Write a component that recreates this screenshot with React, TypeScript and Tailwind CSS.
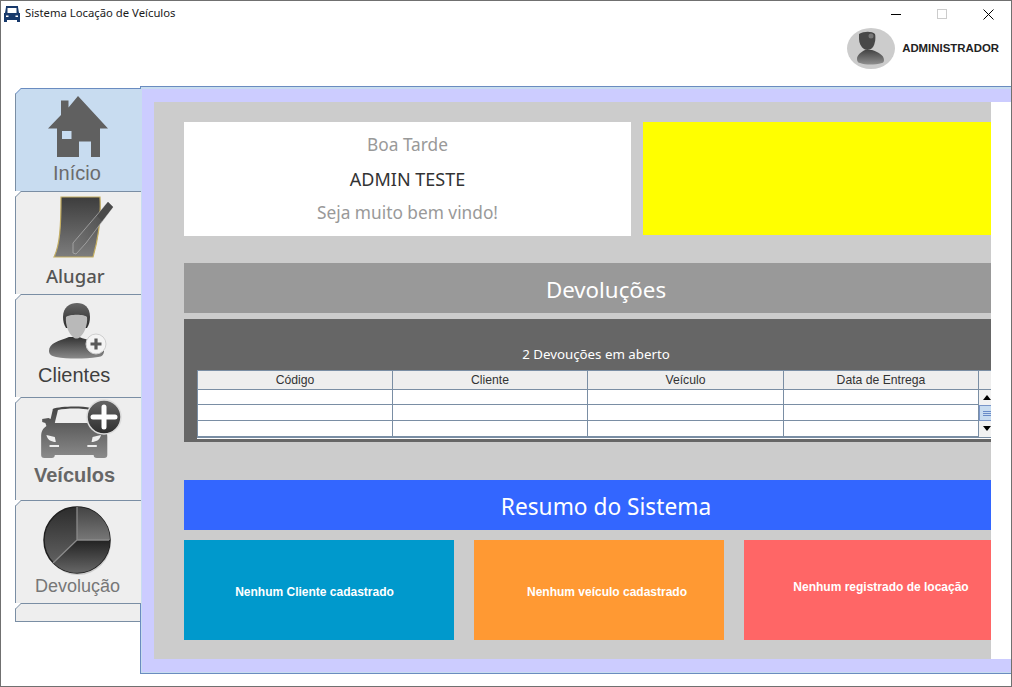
import React from 'react';

const sans = 'font-["Noto_Sans",sans-serif]';
const arial = 'font-["Liberation_Sans",Arial,sans-serif]';

const BusIcon = () => (
  <svg width="16" height="16" viewBox="0 0 16 16" className="shrink-0">
    <path d="M2 0h12v1l1 6h1v9h-3v-2H3v2H0V7h1l1-6z" fill="#17396b" />
    <rect x="3.500" y="2" width="9" height="5" fill="#fff" />
    <rect x="2" y="9.500" width="2.500" height="1.500" fill="#fff" />
    <rect x="11.500" y="9.500" width="2.500" height="1.500" fill="#fff" />
  </svg>
);

const Avatar = () => (
  <svg width="48" height="41" viewBox="0 0 48 41" className="shrink-0">
    <defs>
      <linearGradient id="avBody" x1="0" y1="0" x2="0" y2="1">
        <stop offset="0%" stopColor="#444" />
        <stop offset="100%" stopColor="#8f8f8f" />
      </linearGradient>
    </defs>
    <ellipse cx="24" cy="20.500" rx="24" ry="20.500" fill="#cccccc" />
    <path d="M10 31c0-4 4-7 8-9h7c6 2 12 5 12 10 0 2-1 3-2 3-8 2-16 2-22 0-2 0-3-2-3-4z" fill="url(#avBody)" />
    <path d="M12 6c5-3 13-3 16 0 1 4 0 10-2 13-2 3-6 4-9 2-3-2-5-6-5-10z" fill="#484848" />
    <circle cx="24" cy="8" r="2.500" fill="#777" />
  </svg>
);

const Chamfer = ({ color }: { color: string }) => (
  <svg width="6" height="6" viewBox="0 0 6 6" className="absolute -left-px -top-px">
    <path d="M0 6V0h6z" fill="#fff" />
    <path d="M0.500 6L6 0.500" stroke={color} strokeWidth="1" fill="none" />
  </svg>
);

const HouseIcon = () => (
  <svg width="60" height="62" viewBox="0 0 60 62">
    <path
      d="M30 0L60 32.500H52V61H43V45.500H31V61H9V32.500H0L13 19V4.500H20.500V11.500z"
      fill="#606060"
    />
    <rect x="14" y="35" width="9.500" height="8" fill="#c8dcf0" />
  </svg>
);

const NoteIcon = () => (
  <svg width="62" height="66" viewBox="0 0 62 66">
    <defs>
      <linearGradient id="note" x1="0" y1="0" x2="0" y2="1">
        <stop offset="0%" stopColor="#3d3d3d" />
        <stop offset="100%" stopColor="#7d7d7d" />
      </linearGradient>
      <linearGradient id="pen" x1="1" y1="0" x2="0" y2="1">
        <stop offset="0%" stopColor="#444" />
        <stop offset="100%" stopColor="#777" />
      </linearGradient>
    </defs>
    <path
      d="M9 2H48C49 20 48 38 41 62H2C8 50 9 30 9 2z"
      fill="url(#note)"
      stroke="#c4ae62"
      strokeWidth="1.200"
    />
    <path
      d="M56 7L61 12 34 48 24 59 21 58 21 48z"
      fill="url(#pen)"
      stroke="#b4b4b4"
      strokeWidth="0.700"
    />
    <path d="M56 7L61 12 50 26 45 21z" fill="#4a4a4a" />
  </svg>
);

const ClientIcon = () => (
  <svg width="62" height="62" viewBox="0 0 62 62">
    <defs>
      <linearGradient id="shirt" x1="0" y1="0" x2="0" y2="1">
        <stop offset="0%" stopColor="#333" />
        <stop offset="100%" stopColor="#8a8a8a" />
      </linearGradient>
      <linearGradient id="hair" x1="0" y1="0" x2="0" y2="1">
        <stop offset="0%" stopColor="#666" />
        <stop offset="100%" stopColor="#2a2a2a" />
      </linearGradient>
    </defs>
    <path d="M3 50c0-8 10-10 20-14h10c8 3 24 6 25 14 0 3-2 6-6 6-14 2-30 2-42 0-5-1-7-3-7-6z" fill="url(#shirt)" />
    <path d="M17 16C17 6 24 2 31 2s13 4 13 14c0 4-1 8-3 11H20c-2-3-3-7-3-11z" fill="url(#hair)" />
    <path d="M20 16c3-3 19-3 21 0 1 8-3 17-7 20-2 2-5 2-7 0-4-3-8-12-7-20z" fill="#b9b9b9" />
    <circle cx="50" cy="43" r="10" fill="#f4f4f4" stroke="#cfcfcf" />
    <path d="M50 37.500v11M44.500 43h11" stroke="#5a5a5a" strokeWidth="3.200" />
  </svg>
);

const CarIcon = () => (
  <svg width="84" height="62" viewBox="0 0 84 62">
    <defs>
      <linearGradient id="car" x1="0" y1="0" x2="0" y2="1">
        <stop offset="0%" stopColor="#454545" />
        <stop offset="100%" stopColor="#8a8a8a" />
      </linearGradient>
      <linearGradient id="plus" x1="0" y1="0" x2="0" y2="1">
        <stop offset="0%" stopColor="#666" />
        <stop offset="100%" stopColor="#2d2d2d" />
      </linearGradient>
    </defs>
    <g transform="translate(-3 0) scale(1.05 1)">
      <path
        d="M14 10c8-3 28-3 36-1 3 1 5 7 6 13l5 0v5c4 3 5 6 5 11v18c0 2-1 3-3 3h-7c-2 0-3-1-3-3H16c0 2-1 3-3 3H6c-2 0-3-1-3-3V38c0-5 1-8 5-11l-1-3-3-1v-3l6-1 2 1 2-9z"
        fill="url(#car)"
      />
      <path d="M16 24l3-13c8-2 24-2 30 0l4 13z" fill="#eeeeee" />
      <path d="M8 36l8 2 1 5c-4 0-8-2-9-7zM60 36l-8 2-1 5c4 0 8-2 9-7z" fill="#eeeeee" />
      <path d="M11 46h9v2h-9zM47 46h9v2h-9z" fill="#eeeeee" />
    </g>
    <circle cx="63" cy="18" r="17" fill="url(#plus)" stroke="#dcdcdc" strokeWidth="1.500" />
    <path d="M63 8v20M52 18h22" stroke="#fff" strokeWidth="5" strokeLinecap="round" />
  </svg>
);

const PieIcon = () => (
  <svg width="72" height="70" viewBox="0 0 72 70">
    <defs>
      <linearGradient id="pieA" x1="0" y1="0" x2="0" y2="1">
        <stop offset="0%" stopColor="#2c2c2c" />
        <stop offset="100%" stopColor="#6a6a6a" />
      </linearGradient>
      <linearGradient id="pieB" x1="0" y1="0" x2="0" y2="1">
        <stop offset="0%" stopColor="#444" />
        <stop offset="100%" stopColor="#777" />
      </linearGradient>
      <linearGradient id="pieC" x1="0" y1="0" x2="0" y2="1">
        <stop offset="0%" stopColor="#222" />
        <stop offset="100%" stopColor="#666" />
      </linearGradient>
    </defs>
    <circle cx="36" cy="36" r="33" fill="#aaa" opacity="0.500" />
    <circle cx="35" cy="34" r="33" fill="url(#pieA)" stroke="#1f1f1f" strokeWidth="1.500" />
    <path d="M35 34V1a33 33 0 0 1 33 33z" fill="url(#pieB)" />
    <path d="M35 34H68A33 33 0 0 1 11.500 57z" fill="url(#pieC)" />
    <path d="M35 1V34H67M35 34L11 57" stroke="#8a8a8a" strokeWidth="1.300" fill="none" />
  </svg>
);

type TabProps = {
  active?: boolean;
  icon: React.ReactNode;
  label: string;
  labelClass: string;
  iconClass: string;
};

const Tab = ({ active, icon, label, labelClass, iconClass }: TabProps) => (
  <div
    className={`relative h-[103px] border-t flex flex-col items-center ${
      active ? 'bg-[#c8dcf0] border-[#6a8cc0]' : 'bg-[#eeeeee] border-[#7a8ea4]'
    }`}
  >
    <Chamfer color={active ? '#6a8cc0' : '#7a8ea4'} />
    <div className={iconClass}>{icon}</div>
    <span className={`absolute leading-none ${labelClass}`}>{label}</span>
  </div>
);

const Sidebar = () => (
  <div className="w-[126px] h-[534px] mt-[2px] shrink-0 border-l border-b border-[#7a8ea4] bg-[#eeeeee]">
    <Tab
      active
      icon={<HouseIcon />}
      label="Início"
      iconClass="ml-[-1px] mt-[7px]"
      labelClass={`${arial} top-[74px] left-[37px] text-[20px] text-[#6b6b6b]`}
    />
    <Tab
      icon={<NoteIcon />}
      label="Alugar"
      iconClass="ml-[8px] mt-[3px]"
      labelClass={`${sans} top-[75px] left-[30px] text-[18.500px] font-medium text-[#555555]`}
    />
    <Tab
      icon={<ClientIcon />}
      label="Clientes"
      iconClass="ml-[-3px] mt-[6px]"
      labelClass={`${arial} top-[70px] left-[22px] text-[20px] text-[#3f3f3f]`}
    />
    <Tab
      icon={<CarIcon />}
      label="Veículos"
      iconClass="ml-[9px] mt-[1px]"
      labelClass={`${arial} top-[67px] left-[18px] text-[20px] font-bold text-[#666666]`}
    />
    <Tab
      icon={<PieIcon />}
      label="Devolução"
      iconClass="ml-[-1px] mt-[5px]"
      labelClass={`${arial} top-[76px] left-[19px] text-[18px] text-[#777777]`}
    />
    <div className="relative h-[17px] border-t border-[#7a8ea4]">
      <Chamfer color="#7a8ea4" />
    </div>
  </div>
);

const Devolucoes = () => {
  const cols = ['Código', 'Cliente', 'Veículo', 'Data de Entrega'];
  const widths = ['w-[195px]', 'w-[195px]', 'w-[196px]', 'w-[195px]'];
  return (
    <div className="w-[844px] h-[123px] mt-[6px] bg-[#666666] pl-[13px] pt-[26px]">
      <div className={`${sans} h-[25px] w-[798px] text-center text-[13.300px] leading-[19px] text-white`}>
        2 Devouções em aberto
      </div>
      <div className={`${arial} flex w-[798px] h-[68px] border-l border-t border-b-2 border-[#7a8ea4] bg-white`}>
        {cols.map((col, i) => (
          <div key={col} className={`${widths[i]} h-full border-r border-[#7a8ea4]`}>
            <div className="h-[19px] bg-[#eeeeee] border-b border-[#7a8ea4] text-center text-[12.200px] leading-[19px] text-[#333333]">
              {col}
            </div>
            <div className="h-[15px] border-b border-[#7a8ea4]" />
            <div className="h-[16px] border-b border-[#7a8ea4]" />
          </div>
        ))}
        <div className="flex-1 h-full">
          <div className="h-[19px] bg-[#eeeeee] border-b border-[#7a8ea4]" />
          <div className="h-[47px] bg-[#f2f2f2] flex flex-col items-center">
            <div className="w-full h-[15px] flex items-center justify-center">
              <div className="w-0 h-0 border-x-[4px] border-x-transparent border-b-[5px] border-b-black" />
            </div>
            <div className="w-full h-[16px] bg-[#c8dcf0] border border-[#7a96c8] flex flex-col gap-[1px] items-center justify-center">
              <div className="w-[9px] h-px bg-[#6a8cc8]" />
              <div className="w-[9px] h-px bg-[#6a8cc8]" />
              <div className="w-[9px] h-px bg-[#6a8cc8]" />
            </div>
            <div className="w-full h-[15px] flex items-center justify-center">
              <div className="w-0 h-0 border-x-[4px] border-x-transparent border-t-[5px] border-t-black" />
            </div>
          </div>
        </div>
      </div>
      <div className="w-[798px] h-px bg-white" />
    </div>
  );
};

const ResumoCard = ({ text, bg, cls }: { text: string; bg: string; cls: string }) => (
  <div className={`${bg} ${cls} h-[100px] shrink-0 flex items-center justify-center text-[12px] font-bold text-white ${arial}`}>
    <span>{text}</span>
  </div>
);

export default function App() {
  return (
    <div className={`${sans} w-[1012px] h-[687px] bg-white border border-[#707070] flex flex-col overflow-hidden`}>
      <div className="h-[85px] shrink-0 flex flex-col">
        <div className="h-[26px] flex items-center">
          <div className="ml-[3px] mr-[5px]"><BusIcon /></div>
          <span className="text-[11.300px] text-[#1a1a1a] mb-[2px]">Sistema Locação de Veículos</span>
          <div className="ml-auto flex">
            <div className="w-[46px] h-[26px] flex items-center justify-center">
              <div className="w-[10px] h-px bg-black" />
            </div>
            <div className="w-[46px] h-[26px] flex items-center justify-center">
              <div className="w-[10px] h-[10px] border border-[#cccccc]" />
            </div>
            <div className="w-[46px] h-[26px] flex items-center justify-center">
              <svg width="11" height="11" viewBox="0 0 11 11">
                <path d="M0.500 0.500l10 10M10.500 0.500l-10 10" stroke="#000" strokeWidth="1" />
              </svg>
            </div>
          </div>
        </div>
        <div className="mt-[1px] pr-[12px] flex justify-end items-center gap-[7px]">
          <Avatar />
          <span className={`${arial} text-[11.400px] font-bold text-[#222222]`}>ADMINISTRADOR</span>
        </div>
      </div>

      <div className="flex pl-[14px]">
        <Sidebar />
        <div className="flex-1 h-[588px] border border-[#6a8cc0] border-r-0 bg-[#c8dcf0] pl-[1px] pt-[2px] pb-[1px] -ml-px">
          <div className="h-full bg-[#ccccff] pl-[12px] pt-[13px]">
            <div className="h-[557px] bg-white">
              <div className="w-[837px] h-full bg-[#cccccc] overflow-hidden pl-[30px] pt-[20px]">
                <div className="flex gap-[12px] w-[844px]">
                  <div className="w-[447px] h-[114px] shrink-0 bg-white flex flex-col items-center text-[17.300px]">
                    <span className="mt-[11px] leading-[24px] text-[#999999]">Boa Tarde</span>
                    <span className="mt-[10px] leading-[24px] text-[18px] text-[#333333]">ADMIN TESTE</span>
                    <span className="mt-[10px] leading-[24px] text-[#999999]">Seja muito bem vindo!</span>
                  </div>
                  <div className="w-[385px] h-[113px] shrink-0 bg-[#ffff00]" />
                </div>
                <div className="w-[844px] h-[50px] mt-[27px] pt-[3px] bg-[#999999] flex items-center justify-center text-[22.300px] text-white">
                  Devoluções
                </div>
                <Devolucoes />
                <div className="w-[844px] h-[50px] mt-[38px] pt-[5px] bg-[#3366ff] flex items-center justify-center text-[22.700px] text-white">
                  Resumo do Sistema
                </div>
                <div className="flex gap-[20px] mt-[10px] w-[844px]">
                  <ResumoCard text="Nenhum Cliente cadastrado" bg="bg-[#0099cc]" cls="w-[270px] pr-[9px] pt-[4px]" />
                  <ResumoCard text="Nenhum veículo cadastrado" bg="bg-[#ff9933]" cls="w-[250px] pl-[16px] pt-[4px]" />
                  <ResumoCard text="Nenhum registrado de locação" bg="bg-[#ff6666]" cls="w-[274px] pb-[6px]" />
                </div>
              </div>
            </div>
          </div>
        </div>
      </div>
    </div>
  );
}
